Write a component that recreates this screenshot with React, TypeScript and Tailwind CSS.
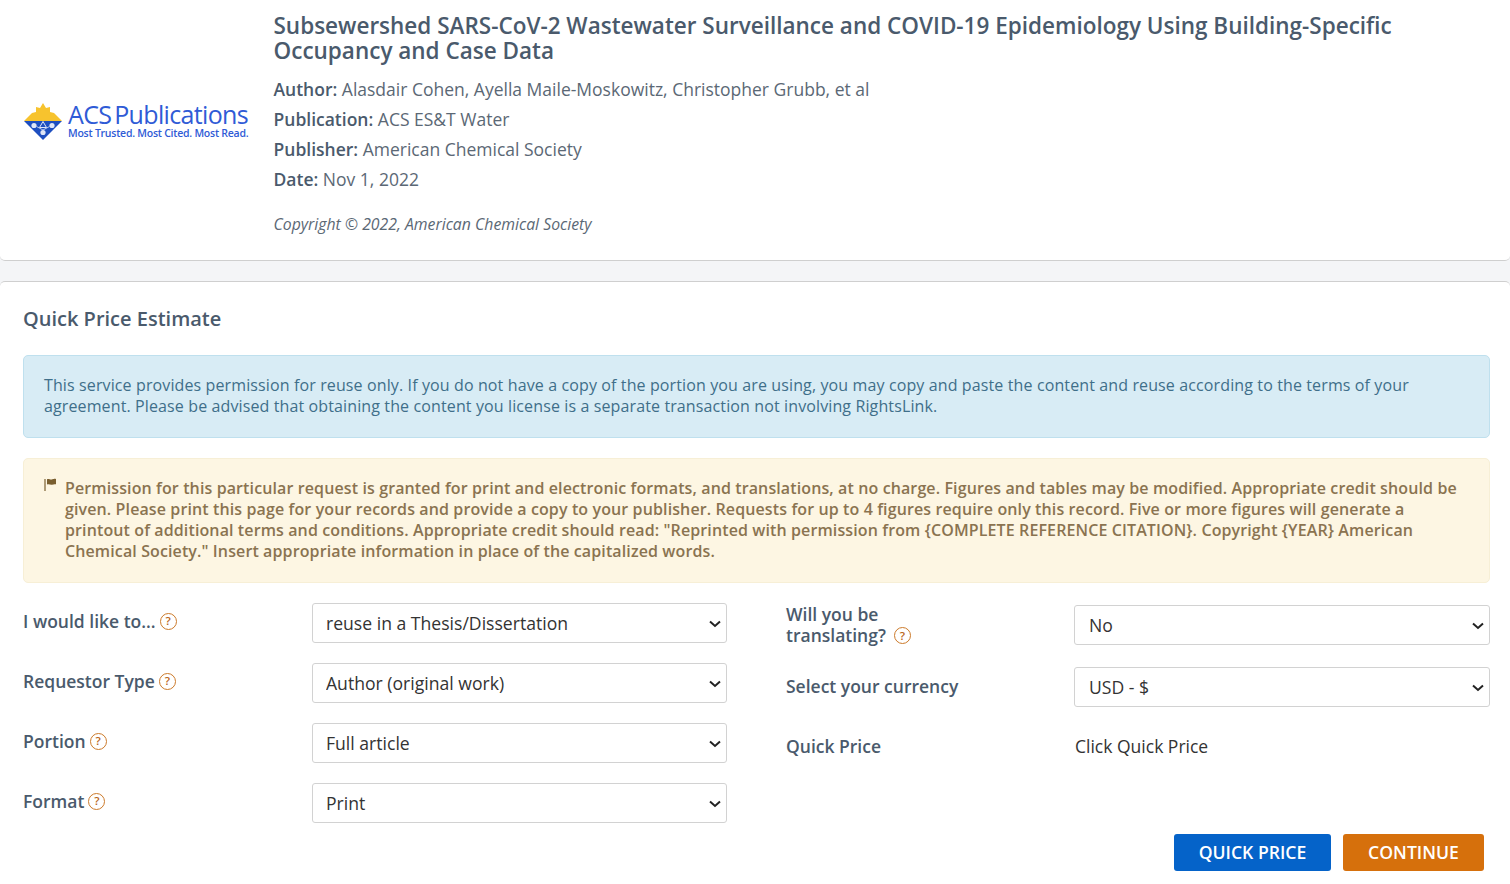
import React from 'react';

const HelpIcon = () => (
  <span className="inline-flex h-[17px] w-[17px] shrink-0 items-center justify-center rounded-full border-[1.5px] border-[#cc7a2a] text-[11.5px] font-semibold leading-none text-[#b8651a]">
    ?
  </span>
);

const AcsLogo = () => (
  <div className="flex w-[226px] items-center">
    <svg width="40" height="38" viewBox="0 0 40 38" className="shrink-0">
      <path d="M20 0l3 5 4-1 0 5 4 1L39 18H1l8-8 4-1 0-5 4 1z" fill="#f7c32e" />
      <path d="M1 18h38L20 37z" fill="#1e4fc0" />
      <circle cx="11" cy="22.500" r="2.600" fill="#dfe6f7" />
      <circle cx="29" cy="22.500" r="2.600" fill="#dfe6f7" />
      <circle cx="20" cy="29.500" r="2.600" fill="#dfe6f7" />
      <path d="M20 18.500l3.500 6h-7z" fill="none" stroke="#dfe6f7" strokeWidth="1" />
      <path d="M13.500 23.500L20 27l6.500-3.500" fill="none" stroke="#dfe6f7" strokeWidth="0.8" />
    </svg>
    <div className="ml-[5px] -mt-[4px] text-[#2f5bd6]">
      <div className="whitespace-nowrap text-[25px] leading-[27px] tracking-[-0.65px]">
        <span className="font-medium">ACS</span><span className="ml-[-3px]"> Publications</span>
      </div>
      <div className="whitespace-nowrap text-[10.5px] font-semibold leading-[11px] tracking-[-0.24px]">
        Most Trusted. Most Cited. Most Read.
      </div>
    </div>
  </div>
);

const Field = ({
  label,
  value,
  className = '',
  labelClass = 'w-[289px] -translate-y-0.5',
  selectClass = 'pl-[13px]',
}: {
  label: React.ReactNode;
  value: string;
  className?: string;
  labelClass?: string;
  selectClass?: string;
}) => (
  <div className={`flex items-center ${className}`}>
    <div className={`shrink-0 text-[17.5px] font-[550] leading-[21px] text-[#4a5a6c] ${labelClass}`}>{label}</div>
    <div className="relative flex-1">
      <select
        defaultValue={value}
        className={`h-10 w-full appearance-none rounded-[3px] border border-[#d2d2d2] bg-white text-[17.6px] text-[#333] ${selectClass}`}
      >
        <option>{value}</option>
      </select>
      <svg width="14" height="8" viewBox="0 0 14 8" className="pointer-events-none absolute right-[5px] top-[17px]">
        <path d="M2 1.500L7 6l5-4.500" fill="none" stroke="#222" strokeWidth="2" />
      </svg>
    </div>
  </div>
);

const Meta = ({ name, value }: { name: string; value: string }) => (
  <div className="text-[17.5px] leading-[30px] text-[#5b6875]">
    <span className="font-semibold text-[#4a5a6c]">{name}:</span> {value}
  </div>
);

const App: React.FC = () => {
  return (
    <div className="h-[884px] overflow-hidden bg-[#f4f5f7] font-['Open_Sans',sans-serif]">
      <div className="flex h-[261px] rounded-b-[5px] border-b border-[#cfcfcf] bg-white">
        <div className="flex w-[273.500px] shrink-0 items-center pl-[23px] pb-[17px]">
          <AcsLogo />
        </div>
        <div className="pt-[13px]">
          <h1 className="w-[1150px] text-[22.5px] font-semibold leading-[25px] text-[#4a5a6c]">
            Subsewershed SARS-CoV-2 Wastewater Surveillance and COVID-19 Epidemiology Using Building-Specific Occupancy and Case Data
          </h1>
          <div className="mt-[11px]">
            <Meta name="Author" value="Alasdair Cohen, Ayella Maile-Moskowitz, Christopher Grubb, et al" />
            <Meta name="Publication" value="ACS ES&T Water" />
            <Meta name="Publisher" value="American Chemical Society" />
            <Meta name="Date" value="Nov 1, 2022" />
          </div>
          <div className="mt-[20px] text-[15.8px] italic leading-[21px] text-[#5b6875]">
            Copyright © 2022, American Chemical Society
          </div>
        </div>
      </div>

      <div className="mt-5 h-[603px] rounded-t-[5px] border-t border-[#cfcfcf] bg-white pl-[23px] pr-5 pt-[22px]">
        <h2 className="text-[20px] font-semibold leading-[30px] text-[#4a5a6c]">Quick Price Estimate</h2>

        <div className="mt-[21px] h-[83px] rounded-[5px] border border-[#bfe0ee] bg-[#d8ecf5] pl-5 pr-5 pt-[19px] text-[16px] leading-[21px] tracking-[0.12px] text-[#3f6f8a]">
          This service provides permission for reuse only. If you do not have a copy of the portion you are using, you may copy and paste the content and reuse according to the terms of your agreement. Please be advised that obtaining the content you license is a separate transaction not involving RightsLink.
        </div>

        <div className="mt-5 flex h-[125px] rounded-[5px] border border-[#f7efd6] bg-[#fdf6e3] pl-5 pr-5 pt-[19px]">
          <svg width="14" height="14" viewBox="0 0 14 14" className="mr-[7px] shrink-0">
            <path d="M1 1v12" stroke="#7a5f30" strokeWidth="1.200" />
            <path d="M3 1.200c2-1 3 .8 5 .2s2.500-.8 4-.4v5.300c-1.500-.4-2.500 0-4 .4s-3-1-5-.2z" fill="#7a5f30" />
          </svg>
          <p className="text-[16px] font-semibold leading-[21px] tracking-[0.115px] text-[#8a7350]">
            Permission for this particular request is granted for print and electronic formats, and translations, at no charge. Figures and tables may be modified. Appropriate credit should be given. Please print this page for your records and provide a copy to your publisher. Requests for up to 4 figures require only this record. Five or more figures will generate a printout of additional terms and conditions. Appropriate credit should read: "Reprinted with permission from {'{COMPLETE REFERENCE CITATION}'}. Copyright {'{YEAR}'} American Chemical Society." Insert appropriate information in place of the capitalized words.
          </p>
        </div>

        <div className="mt-5 flex justify-between">
          <div className="flex w-[704px] flex-col gap-5">
            <Field value="reuse in a Thesis/Dissertation" label={<span className="flex items-center gap-[4px]">I would like to... <HelpIcon /></span>} />
            <Field value="Author (original work)" label={<span className="flex items-center gap-[4px]">Requestor Type <HelpIcon /></span>} />
            <Field value="Full article" label={<span className="flex items-center gap-[4px]">Portion <HelpIcon /></span>} />
            <Field value="Print" label={<span className="flex items-center gap-[4px]">Format <HelpIcon /></span>} />
          </div>
          <div className="flex w-[704px] flex-col pt-px">
            <Field
              value="No"
              labelClass="w-[288px]"
              selectClass="pl-[14px]"
              label={<span>Will you be<br /><span className="inline-flex items-center gap-2">translating? <HelpIcon /></span></span>}
            />
            <Field className="mt-[21px]" value="USD - $" labelClass="w-[288px] -translate-y-px" selectClass="pl-[14px]" label="Select your currency" />
            <div className="mt-[24px] flex items-center text-[17.5px] leading-[30px]">
              <div className="w-[289px] font-[550] text-[#4a5a6c]">Quick Price</div>
              <div className="text-[#333]">Click Quick Price</div>
            </div>
          </div>
        </div>

        <div className="mt-[11px] flex justify-end gap-3 pr-[6px]">
          <button className="h-[37px] w-[157px] rounded-[3px] bg-[#0563c9] text-[17.6px] font-semibold text-white">QUICK PRICE</button>
          <button className="h-[37px] w-[141px] rounded-[3px] bg-[#d6700c] text-[17.6px] font-semibold text-white">CONTINUE</button>
        </div>
      </div>
    </div>
  );
};

export default App;
